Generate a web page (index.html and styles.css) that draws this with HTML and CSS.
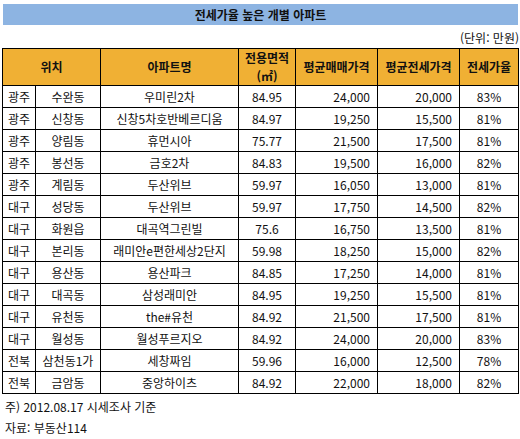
FILE: index.html
```html
<!DOCTYPE html>
<html lang="ko">
<head>
    <meta charset="UTF-8">
    <title>전세가율 높은 개별 아파트</title>
    <link rel="stylesheet" href="styles.css">
</head>
<body>
    <div class="page">
        <div class="title-bar">전세가율 높은 개별 아파트</div>
        <div class="unit">(단위: 만원)</div>

        <table class="apt-table">
            <colgroup>
                <col class="c-region">
                <col class="c-dong">
                <col class="c-name">
                <col class="c-area">
                <col class="c-price">
                <col class="c-price">
                <col class="c-rate">
            </colgroup>
            <thead>
                <tr>
                    <th colspan="2">위치</th>
                    <th>아파트명</th>
                    <th>전용면적<br>(㎡)</th>
                    <th>평균매매가격</th>
                    <th>평균전세가격</th>
                    <th>전세가율</th>
                </tr>
            </thead>
            <tbody>
                <tr><td>광주</td><td>수완동</td><td>우미린2차</td><td>84.95</td><td class="num">24,000</td><td class="num">20,000</td><td>83%</td></tr>
                <tr><td>광주</td><td>신창동</td><td>신창5차호반베르디움</td><td>84.97</td><td class="num">19,250</td><td class="num">15,500</td><td>81%</td></tr>
                <tr><td>광주</td><td>양림동</td><td>휴먼시아</td><td>75.77</td><td class="num">21,500</td><td class="num">17,500</td><td>81%</td></tr>
                <tr><td>광주</td><td>봉선동</td><td>금호2차</td><td>84.83</td><td class="num">19,500</td><td class="num">16,000</td><td>82%</td></tr>
                <tr><td>광주</td><td>계림동</td><td>두산위브</td><td>59.97</td><td class="num">16,050</td><td class="num">13,000</td><td>81%</td></tr>
                <tr><td>대구</td><td>성당동</td><td>두산위브</td><td>59.97</td><td class="num">17,750</td><td class="num">14,500</td><td>82%</td></tr>
                <tr><td>대구</td><td>화원읍</td><td>대곡역그린빌</td><td>75.6</td><td class="num">16,750</td><td class="num">13,500</td><td>81%</td></tr>
                <tr><td>대구</td><td>본리동</td><td>래미안e편한세상2단지</td><td>59.98</td><td class="num">18,250</td><td class="num">15,000</td><td>82%</td></tr>
                <tr><td>대구</td><td>용산동</td><td>용산파크</td><td>84.85</td><td class="num">17,250</td><td class="num">14,000</td><td>81%</td></tr>
                <tr><td>대구</td><td>대곡동</td><td>삼성래미안</td><td>84.95</td><td class="num">19,250</td><td class="num">15,500</td><td>81%</td></tr>
                <tr><td>대구</td><td>유천동</td><td>the#유천</td><td>84.92</td><td class="num">21,500</td><td class="num">17,500</td><td>81%</td></tr>
                <tr><td>대구</td><td>월성동</td><td>월성푸르지오</td><td>84.92</td><td class="num">24,000</td><td class="num">20,000</td><td>83%</td></tr>
                <tr><td>전북</td><td>삼천동1가</td><td>세창짜임</td><td>59.96</td><td class="num">16,000</td><td class="num">12,500</td><td>78%</td></tr>
                <tr><td>전북</td><td>금암동</td><td>중앙하이츠</td><td>84.92</td><td class="num">22,000</td><td class="num">18,000</td><td>82%</td></tr>
            </tbody>
        </table>

        <div class="notes">
            <p>주) 2012.08.17 시세조사 기준</p>
            <p>자료: 부동산114</p>
        </div>
    </div>
</body>
</html>
```

FILE: styles.css
```css
* {
    margin: 0;
    padding: 0;
    box-sizing: border-box;
}

body {
    font-family: "Noto Sans CJK KR", "Noto Sans", sans-serif;
    font-size: 12px;
    color: #111;
    background: white;
}

.page {
    width: 517px;
    margin-left: 2px;
    padding-top: 4px;
    padding-bottom: 1px;
    border-bottom: 1px dotted #e6dede;
}

.title-bar {
    margin: 0 1px;
    height: 21px;
    line-height: 21px;
    background: #8db4e2;
    text-align: center;
    font-weight: bold;
}

.unit {
    padding-top: 4px;
    height: 23px;
    line-height: 18px;
    text-align: right;
}

.apt-table {
    width: 516px;
    border-collapse: collapse;
    table-layout: fixed;
}

.c-region { width: 33px; }
.c-dong { width: 65px; }
.c-name { width: 138px; }
.c-area { width: 57px; }
.c-price { width: 82px; }
.c-rate { width: 59px; }

.apt-table th,
.apt-table td {
    border: 1px solid #000;
    text-align: center;
    white-space: nowrap;
    overflow: hidden;
}

.apt-table th {
    background: #f0b034;
    font-weight: bold;
    height: 36px;
    line-height: 18px;
}

.apt-table td {
    height: 22px;
    line-height: 20px;
}

.apt-table td.num {
    text-align: right;
    padding-right: 7px;
}

.notes p {
    height: 21px;
    line-height: 21px;
    padding-left: 3px;
}

.notes p:first-child {
    margin-top: 2px;
}
```
